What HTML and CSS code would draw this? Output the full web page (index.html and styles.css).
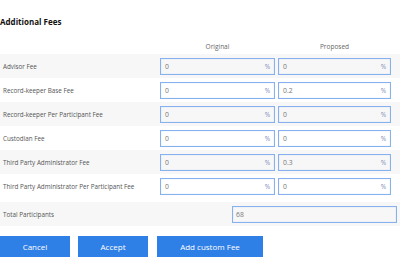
FILE: index.html
```html
<!DOCTYPE html>
<html lang="en">
<head>
    <meta charset="UTF-8">
    <title>Additional Fees</title>
    <link rel="stylesheet" href="styles.css">
</head>
<body>
    <div class="fees">
        <h3 class="fees-title">Additional Fees</h3>
        <div class="fees-head">
            <span class="col-head">Original</span>
            <span class="col-head">Proposed</span>
        </div>
        <div class="fee-row striped">
            <span class="fee-label">Advisor Fee</span>
            <div class="fee-input orig"><span>0</span><i>%</i></div>
            <div class="fee-input prop"><span>0</span><i>%</i></div>
        </div>
        <div class="fee-row">
            <span class="fee-label">Record-keeper Base Fee</span>
            <div class="fee-input orig"><span>0</span><i>%</i></div>
            <div class="fee-input prop"><span>0.2</span><i>%</i></div>
        </div>
        <div class="fee-row striped">
            <span class="fee-label">Record-keeper Per Participant Fee</span>
            <div class="fee-input orig"><span>0</span><i>%</i></div>
            <div class="fee-input prop"><span>0</span><i>%</i></div>
        </div>
        <div class="fee-row">
            <span class="fee-label">Custodian Fee</span>
            <div class="fee-input orig"><span>0</span><i>%</i></div>
            <div class="fee-input prop"><span>0</span><i>%</i></div>
        </div>
        <div class="fee-row striped">
            <span class="fee-label">Third Party Administrator Fee</span>
            <div class="fee-input orig"><span>0</span><i>%</i></div>
            <div class="fee-input prop"><span>0.3</span><i>%</i></div>
        </div>
        <div class="fee-row">
            <span class="fee-label">Third Party Administrator Per Participant Fee</span>
            <div class="fee-input orig"><span>0</span><i>%</i></div>
            <div class="fee-input prop"><span>0</span><i>%</i></div>
        </div>
        <div class="fee-row striped total-row">
            <span class="fee-label total-label">Total Participants</span>
            <div class="fee-input total"><span>68</span></div>
        </div>
        <div class="actions">
            <button class="btn btn-cancel">Cancel</button>
            <button class="btn btn-accept">Accept</button>
            <button class="btn btn-custom">Add custom Fee</button>
        </div>
    </div>
</body>
</html>
```

FILE: styles.css
```css
* {
    margin: 0;
    padding: 0;
    box-sizing: border-box;
    font-family: 'Open Sans', 'Liberation Sans', sans-serif;
}

body {
    background-color: #fff;
    width: 400px;
    height: 270px;
    overflow: hidden;
}

.fees {
    padding-top: 16px;
}

.fees-title {
    font-size: 8px;
    font-weight: 700;
    color: #111;
    height: 12px;
    line-height: 12px;
    margin-bottom: 11px;
}

.fees-head {
    display: flex;
    height: 15px;
    padding-left: 160px;
    gap: 3px;
}

.col-head {
    font-size: 6.5px;
    color: #666;
    text-align: center;
    line-height: 15px;
}

.col-head:first-child {
    width: 115px;
}

.col-head:last-child {
    width: 113px;
}

.fee-row {
    display: flex;
    align-items: center;
    height: 24px;
    gap: 3px;
}

.fee-row.striped {
    background-color: #f7f7f7;
}

.fee-label {
    width: 157px;
    padding-left: 3px;
    font-size: 6.3px;
    color: #555;
    white-space: nowrap;
}

.fee-input {
    display: flex;
    align-items: center;
    justify-content: space-between;
    height: 17px;
    border: 1px solid #86b0ee;
    box-shadow: inset 0 0 1px rgba(134, 176, 238, 0.7);
    padding: 0 4px;
    font-size: 6.8px;
    color: #777;
}

.fee-input i {
    font-style: normal;
    color: #7c8fb8;
    font-size: 6.5px;
}

.fee-input.orig {
    width: 115px;
}

.fee-input.prop {
    width: 113px;
}

.total-row {
    margin-top: 4px;
}

.total-label {
    width: 229px;
}

.fee-input.total {
    width: 165px;
    padding-left: 3px;
}

.actions {
    display: flex;
    gap: 8px;
    margin-top: 10px;
}

.btn {
    height: 21px;
    border: none;
    background-color: #2f80e6;
    color: #fff;
    font-size: 8px;
    cursor: pointer;
}

.btn-cancel {
    width: 70px;
}

.btn-accept {
    width: 70px;
}

.btn-custom {
    width: 106px;
    margin-left: 1px;
}
```
